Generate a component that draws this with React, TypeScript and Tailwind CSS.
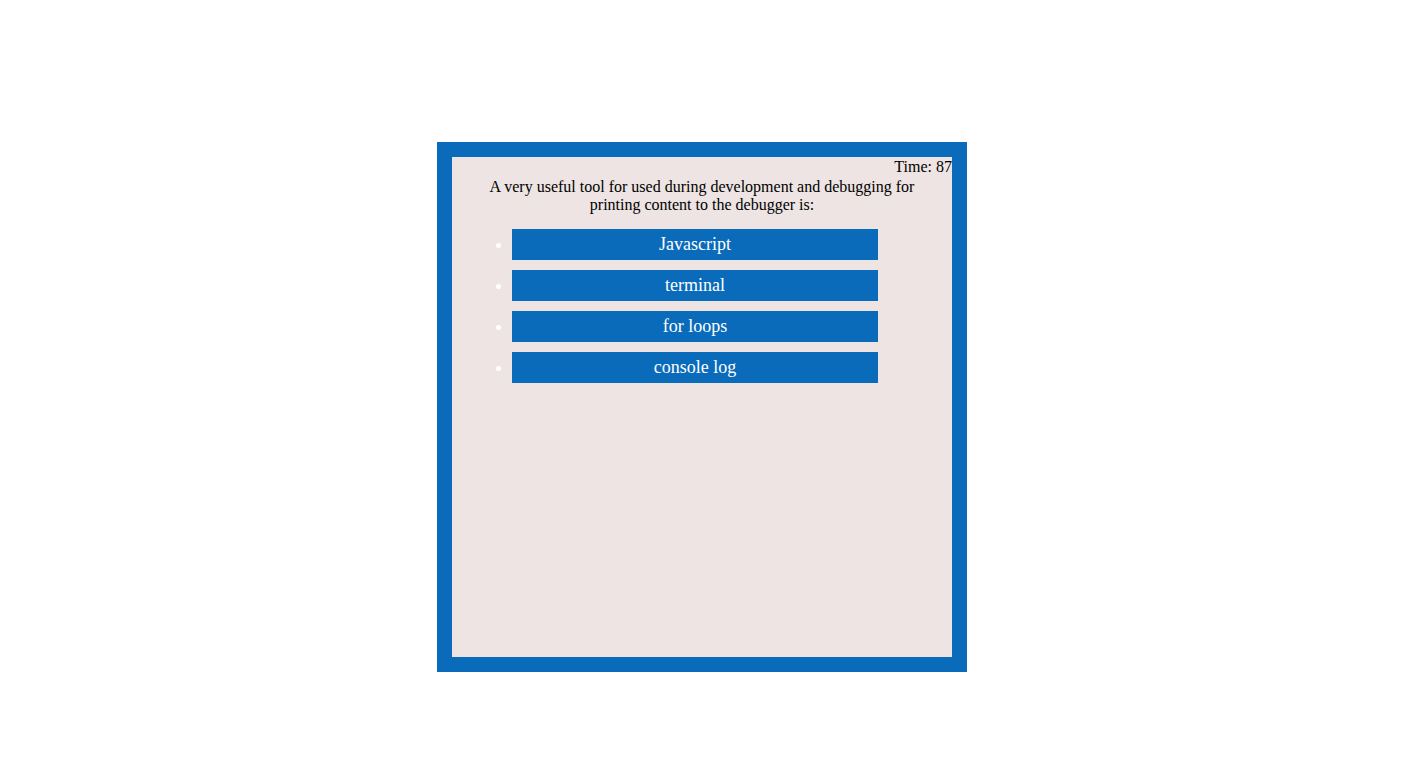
import React from "react";

export default function App() {
  const answers = ["Javascript", "terminal", "for loops", "console log"];
  return (
    <div className="w-[1415px] h-[767px] bg-white pt-[142px] pl-[437px]" style={{ fontFamily: '"Liberation Serif", "Times New Roman", serif' }}>
      <div className="w-[530px] h-[530px] border-[15px] border-[#0a6bba] bg-[#ede4e3] text-black text-[16px] leading-[18px] pt-[1px]">
        <div className="text-right h-[19px] leading-[18px]">Time: 87</div>
        <p className="w-[450px] mx-auto mt-[1px] text-center leading-[18px]">
          A very useful tool for used during development and debugging for printing content to the debugger is:
        </p>
        <ul className="list-disc ml-[20px] pl-[40px] mt-[15px] flex flex-col gap-[10px] marker:text-white">
          {answers.map((a) => (
            <li key={a} className="w-[366px] h-[31px] leading-[31px]">
              <button className="w-[366px] h-[31px] bg-[#0a6bba] text-white text-[18px] leading-[31px] text-center align-top" style={{ fontFamily: '"Liberation Serif", "Times New Roman", serif' }}>
                {a}
              </button>
            </li>
          ))}
        </ul>
      </div>
    </div>
  );
}
